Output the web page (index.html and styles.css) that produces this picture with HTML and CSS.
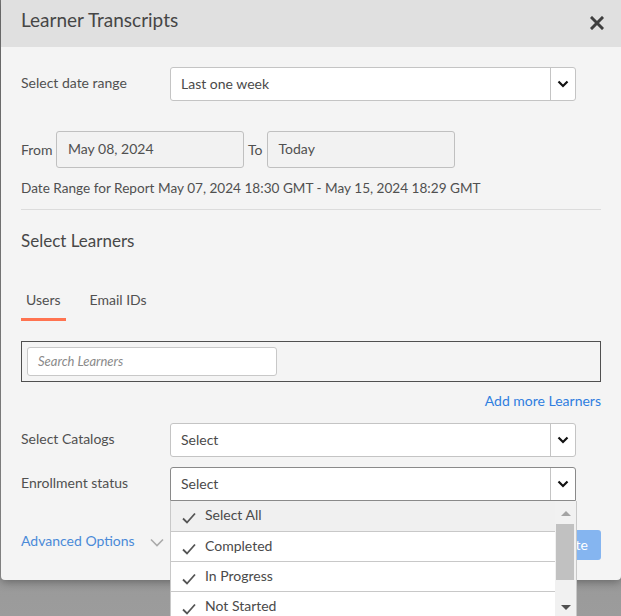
FILE: index.html
```html
<!DOCTYPE html>
<html>
<head>
<meta charset="utf-8">
<link rel="stylesheet" href="styles.css">
</head>
<body>
<div class="modal">
  <div class="modal-header">
    <h1 class="title">Learner Transcripts</h1>
    <button class="close" aria-label="Close">
      <svg width="14" height="14" viewBox="0 0 14 14"><path d="M2 2 L12 12 M12 2 L2 12" stroke="#3f3f3f" stroke-width="3" stroke-linecap="square"/></svg>
    </button>
  </div>
  <div class="modal-body">
    <div class="field-row">
      <label class="field-label">Select date range</label>
      <div class="select">
        <span class="select-value">Last one week</span>
        <span class="select-arrow"><svg width="12" height="8" viewBox="0 0 12 8"><path d="M1.5 1.5 L6 6 L10.5 1.5" fill="none" stroke="#111" stroke-width="2.2"/></svg></span>
      </div>
    </div>

    <div class="date-row">
      <span class="date-label">From</span>
      <div class="date-input">May 08, 2024</div>
      <span class="date-label to">To</span>
      <div class="date-input">Today</div>
    </div>

    <p class="range-note">Date Range for Report May 07, 2024 18:30 GMT - May 15, 2024 18:29 GMT</p>
    <hr class="divider">

    <h2 class="section-title">Select Learners</h2>

    <div class="tabs">
      <div class="tab active">Users</div>
      <div class="tab">Email IDs</div>
    </div>

    <div class="search-box">
      <div class="search-input">Search Learners</div>
    </div>

    <div class="add-more"><a class="link">Add more Learners</a></div>

    <div class="field-row catalogs">
      <label class="field-label">Select Catalogs</label>
      <div class="select">
        <span class="select-value">Select</span>
        <span class="select-arrow"><svg width="12" height="8" viewBox="0 0 12 8"><path d="M1.5 1.5 L6 6 L10.5 1.5" fill="none" stroke="#111" stroke-width="2.2"/></svg></span>
      </div>
    </div>

    <div class="field-row enrollment">
      <label class="field-label">Enrollment status</label>
      <div class="select open">
        <span class="select-value">Select</span>
        <span class="select-arrow"><svg width="12" height="8" viewBox="0 0 12 8"><path d="M1.5 1.5 L6 6 L10.5 1.5" fill="none" stroke="#111" stroke-width="2.2"/></svg></span>
        <div class="dropdown">
          <ul class="options">
            <li class="option first"><svg class="check" width="14" height="12" viewBox="0 0 14 12"><path d="M1 6.5 L5 10.5 L13 1.5" fill="none" stroke="#555" stroke-width="1.8"/></svg><span class="opt-text">Select All</span></li>
            <li class="option"><svg class="check" width="14" height="12" viewBox="0 0 14 12"><path d="M1 6.5 L5 10.5 L13 1.5" fill="none" stroke="#555" stroke-width="1.8"/></svg><span class="opt-text">Completed</span></li>
            <li class="option"><svg class="check" width="14" height="12" viewBox="0 0 14 12"><path d="M1 6.5 L5 10.5 L13 1.5" fill="none" stroke="#555" stroke-width="1.8"/></svg><span class="opt-text">In Progress</span></li>
            <li class="option"><svg class="check" width="14" height="12" viewBox="0 0 14 12"><path d="M1 6.5 L5 10.5 L13 1.5" fill="none" stroke="#555" stroke-width="1.8"/></svg><span class="opt-text">Not Started</span></li>
          </ul>
          <div class="scrollbar">
            <span class="sb-up"></span>
            <span class="sb-thumb"></span>
            <span class="sb-down"></span>
          </div>
        </div>
      </div>
    </div>

    <div class="footer">
      <a class="link advanced">Advanced Options</a>
      <svg class="adv-chevron" width="14" height="9" viewBox="0 0 14 9"><path d="M1 1.5 L7 7.5 L13 1.5" fill="none" stroke="#aaa" stroke-width="1.6"/></svg>
      <button class="generate">Generate</button>
    </div>
  </div>
</div>
</body>
</html>
```

FILE: styles.css
```css
* { box-sizing: border-box; }

html, body {
  margin: 0;
  height: 100%;
}

body {
  background: linear-gradient(#7a7a7a, #9c9c9c);
  font-family: "Lato", "Noto Sans", sans-serif;
  color: #505050;
  overflow: hidden;
}

.modal {
  margin-left: 1px;
  width: 620px;
  height: 580px;
  background: #f4f4f4;
  border-radius: 0 0 4px 4px;
  box-shadow: 0 2px 10px rgba(0,0,0,0.35);
  position: relative;
}

.modal-header {
  height: 47px;
  background: #e0e0e0;
  display: flex;
  align-items: flex-start;
  justify-content: space-between;
  padding: 0 17px 0 20px;
}

.title {
  margin: 0;
  font-size: 19px;
  font-weight: 400;
  line-height: 40px;
  color: #464646;
}

.close {
  border: 0;
  background: none;
  padding: 0;
  margin-top: 16px;
  width: 14px;
  height: 14px;
  display: flex;
}

.modal-body {
  padding: 20px 20px 0 20px;
}

.field-row {
  display: flex;
  align-items: center;
}

.field-label {
  width: 149px;
  font-size: 14px;
  color: #505050;
  margin-top: -3px;
}

.select {
  position: relative;
  width: 406px;
  height: 34px;
  background: #fff;
  border: 1px solid #c4c4c4;
  border-radius: 3px;
  display: flex;
  align-items: center;
}

.select.open {
  border-color: #8a8a8a;
  border-radius: 3px 3px 0 0;
}

.select-value {
  flex: 1;
  padding-left: 10px;
  font-size: 14px;
  color: #4a4a4a;
  margin-top: -2px;
}

.select-arrow {
  width: 25px;
  height: 100%;
  border-left: 1px solid #c4c4c4;
  display: flex;
  align-items: center;
  justify-content: center;
}

.date-row {
  display: flex;
  align-items: center;
  margin-top: 30px;
}

.date-label {
  font-size: 14px;
  color: #505050;
  width: 35px;
}

.date-label.to {
  width: auto;
  margin: 0 4px 0 4px;
}

.date-input {
  width: 188px;
  height: 37px;
  border: 1px solid #c0c0c0;
  border-radius: 3px;
  background: #f2f2f2;
  font-size: 14px;
  color: #505050;
  padding: 8px 0 0 11px;
}

.range-note {
  margin: 10px 0 0 0;
  font-size: 13.6px;
  line-height: 20px;
  color: #505050;
}

.divider {
  border: 0;
  border-top: 1px solid #dcdcdc;
  margin: 11px 0 0 0;
}

.section-title {
  margin: 20px 0 0 0;
  font-size: 17px;
  line-height: 22px;
  font-weight: 400;
  color: #484848;
}

.tabs {
  display: flex;
  margin-top: 38px;
}

.tab {
  font-size: 14px;
  line-height: 20px;
  color: #505050;
  padding: 0 5px 8px 5px;
  margin-right: 19px;
  border-bottom: 3px solid transparent;
}

.tab.active {
  border-bottom-color: #ff7350;
}

.search-box {
  margin-top: 20px;
  height: 41px;
  border: 1px solid #505050;
  padding: 5px;
}

.search-input {
  width: 250px;
  height: 29px;
  background: #fff;
  border: 1px solid #c8c8c8;
  border-radius: 3px;
  font-size: 13px;
  font-style: italic;
  color: #8a8a8a;
  padding: 5px 0 0 10px;
}

.add-more {
  display: flex;
  justify-content: flex-end;
  margin-top: 10px;
  line-height: 18px;
}

.link {
  font-size: 14px;
  color: #2f7ee0;
  cursor: pointer;
}

.catalogs {
  margin-top: 13px;
}

.enrollment {
  margin-top: 10px;
  position: relative;
  z-index: 5;
}

.dropdown {
  position: absolute;
  left: -1px;
  top: 33px;
  width: 407px;
  height: 130px;
  background: #fff;
  border: 1px solid #c8c8c8;
  border-top: 0;
  display: flex;
}

.options {
  list-style: none;
  margin: 0;
  padding: 0;
  flex: 1;
}

.option {
  height: 30px;
  border-bottom: 1px solid #c8c8c8;
  display: flex;
  align-items: center;
  padding-left: 11px;
  font-size: 14px;
  color: #4a4a4a;
}

.opt-text {
  margin-top: -3px;
}

.option.first {
  background: #f0f0f0;
  height: 31px;
}

.check {
  margin: 4px 9px 0 0;
}

.scrollbar {
  width: 21px;
  background: #f1f1f1;
  position: relative;
}

.sb-up {
  position: absolute;
  left: 6px;
  top: 10px;
  border-left: 5px solid transparent;
  border-right: 5px solid transparent;
  border-bottom: 5px solid #a3a3a3;
}

.sb-thumb {
  position: absolute;
  left: 1px;
  top: 23px;
  width: 18px;
  height: 56px;
  background: #c1c1c1;
}

.sb-down {
  position: absolute;
  left: 6px;
  top: 104px;
  border-left: 5px solid transparent;
  border-right: 5px solid transparent;
  border-top: 5px solid #505050;
}

.footer {
  display: flex;
  align-items: center;
  margin-top: 24px;
  height: 30px;
}

.advanced {
  color: #4a8ad8;
}

.adv-chevron {
  margin: 4px 0 0 15px;
}

.generate {
  margin: 9px 0 0 auto;
  height: 30px;
  padding: 0 13px;
  border: 0;
  border-radius: 3px;
  background: #85b5f0;
  color: #fff;
  font-family: inherit;
  font-size: 14px;
}
```
